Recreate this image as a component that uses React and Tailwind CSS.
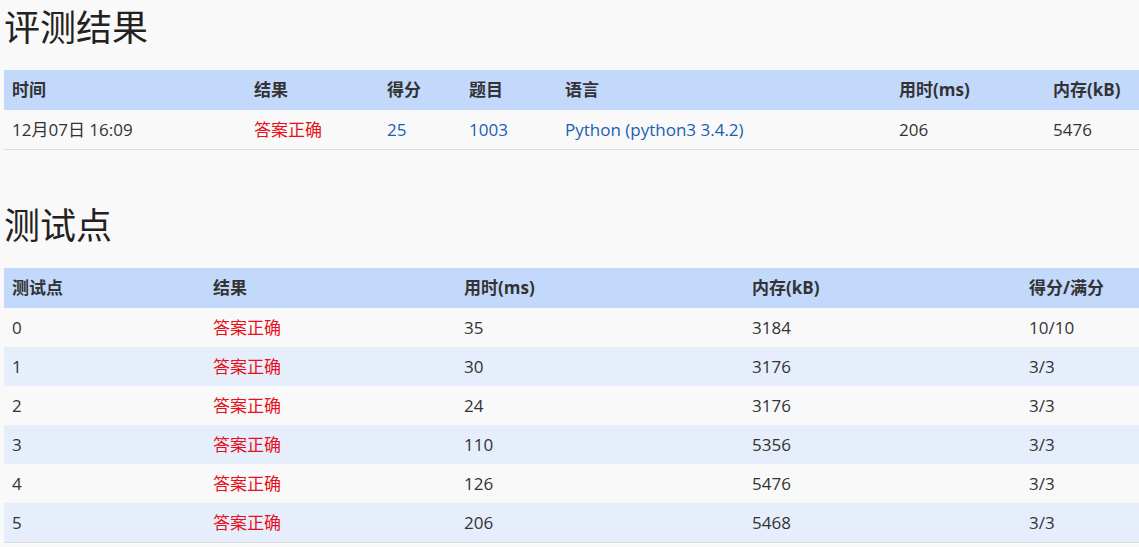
export default function App() {
  const f = { fontFamily: '"Open Sans","Noto Sans CJK SC",sans-serif' };
  const t1 = "grid grid-cols-[242px_133px_82px_96px_334px_154px_1fr]";
  const t2 = "grid grid-cols-[201px_251px_288px_277px_1fr]";
  const rows = [["0","35","3184","10/10"],["1","30","3176","3/3"],["2","24","3176","3/3"],["3","110","5356","3/3"],["4","126","5476","3/3"],["5","206","5468","3/3"]];
  return (
    <div className="bg-[#f9f9f9] min-h-[547px] w-[1139px] overflow-hidden text-[#333] text-[17px]" style={f}>
      <h1 className="text-[36px] leading-none pl-[4px] pt-[10px] h-[70px] text-[#222]">评测结果</h1>
      <div className="ml-[4px] w-[1140px] border-b border-[#ddd]">
        <div className={`${t1} bg-[#c3d9fc] h-[40px] items-center pl-[8px] font-bold`}>
          <div>时间</div><div>结果</div><div>得分</div><div>题目</div><div>语言</div><div>用时(ms)</div><div>内存(kB)</div>
        </div>
        <div className={`${t1} bg-[#f9f9f9] h-[39px] items-center pl-[8px]`}>
          <div>12月07日 16:09</div><div className="text-[#e8101a]">答案正确</div><div className="text-[#1a5fb4]">25</div><div className="text-[#1a5fb4]">1003</div><div className="text-[#1a5fb4]">Python (python3 3.4.2)</div><div>206</div><div>5476</div>
        </div>
      </div>
      <h1 className="text-[36px] leading-none pl-[4px] pt-[58px] h-[118px] text-[#222]">测试点</h1>
      <div className="ml-[4px] w-[1140px] border-b border-[#ddd]">
        <div className={`${t2} bg-[#c3d9fc] h-[40px] items-center pl-[8px] font-bold`}>
          <div>测试点</div><div>结果</div><div>用时(ms)</div><div>内存(kB)</div><div>得分/满分</div>
        </div>
        {rows.map((r, i) => (
          <div key={i} className={`${t2} ${i % 2 ? "bg-[#e6eefb]" : "bg-[#f9f9f9]"} h-[39px] items-center pl-[8px]`}>
            <div>{r[0]}</div><div className="text-[#e8101a]">答案正确</div><div>{r[1]}</div><div>{r[2]}</div><div>{r[3]}</div>
          </div>
        ))}
      </div>
    </div>
  );
}
